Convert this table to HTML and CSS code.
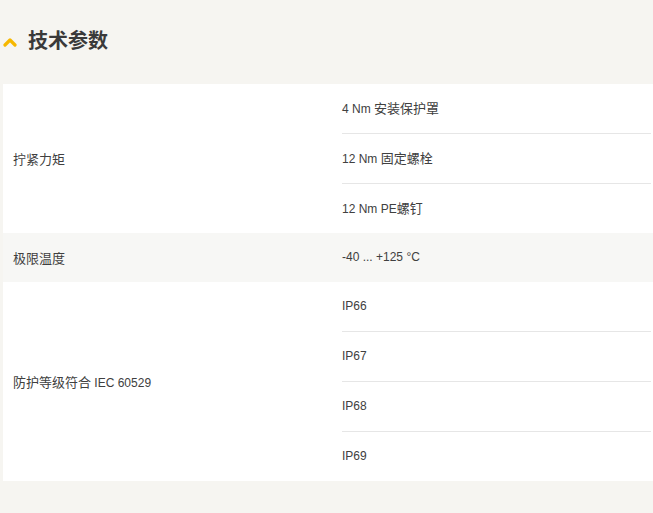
FILE: index.html
```html
<!DOCTYPE html>
<html lang="zh-CN">
<head>
<meta charset="utf-8">
<link rel="stylesheet" href="styles.css">
</head>
<body>
<div class="section">
  <div class="head">
    <svg class="chev" width="14" height="10" viewBox="0 0 14 10"><path d="M2 8 L7 3 L12 8" fill="none" stroke="#f6b800" stroke-width="3.2" stroke-linecap="round" stroke-linejoin="round"/></svg>
    <h2 class="title">技术参数</h2>
  </div>
  <div class="table">
    <div class="row">
      <div class="label"><span class="txt"><span class="zh">拧紧力矩</span></span></div>
      <div class="values">
        <div class="val">4 Nm <span class="zh">安装保护罩</span></div>
        <div class="val">12 Nm <span class="zh">固定螺栓</span></div>
        <div class="val">12 Nm PE<span class="zh">螺钉</span></div>
      </div>
    </div>
    <div class="row alt">
      <div class="label"><span class="txt"><span class="zh">极限温度</span></span></div>
      <div class="values">
        <div class="val">-40 ... +125 °C</div>
      </div>
    </div>
    <div class="row">
      <div class="label"><span class="txt"><span class="zh">防护等级符合</span> IEC 60529</span></div>
      <div class="values">
        <div class="val">IP66</div>
        <div class="val">IP67</div>
        <div class="val">IP68</div>
        <div class="val">IP69</div>
      </div>
    </div>
  </div>
</div>
</body>
</html>
```

FILE: styles.css
```css
html, body {
  margin: 0;
  padding: 0;
  background: #f6f5f1;
}
body {
  font-family: "Liberation Sans", "Noto Sans CJK SC", sans-serif;
  font-size: 12px;
  color: #404040;
}
.section {
  padding-left: 3px;
}
.head {
  display: flex;
  align-items: center;
  height: 84px;
  box-sizing: border-box;
  margin-left: -3px;
}
.chev {
  display: block;
  margin-left: 3px;
  margin-top: 0;
}
.title {
  margin: 0 0 4px 11px;
  font-family: "Noto Sans CJK SC", sans-serif;
  font-size: 20px;
  font-weight: 700;
  color: #3a3a3a;
  line-height: 1;
}
.zh {
  font-family: "Noto Sans CJK SC", sans-serif;
  font-size: 13px;
}
.table {
  background: #ffffff;
}
.row {
  display: grid;
  grid-template-columns: 329px 1fr;
  background: #ffffff;
}
.row.alt {
  background: #f7f7f5;
}
.label {
  display: flex;
  align-items: center;
  padding-left: 10px;
}
.values {
  padding: 0 2px 0 10px;
}
.val {
  height: 49px;
  line-height: 48px;
  border-bottom: 1px solid #e6e6e6;
  white-space: nowrap;
}
.val:last-child {
  border-bottom: none;
}
```
